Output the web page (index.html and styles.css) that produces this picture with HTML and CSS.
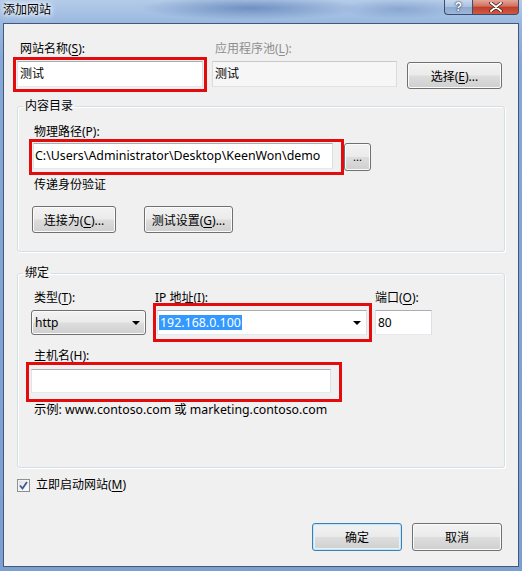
FILE: index.html
```html
<!DOCTYPE html>
<html lang="zh-CN">
<head>
    <meta charset="UTF-8">
    <title>添加网站</title>
    <link rel="stylesheet" href="styles.css">
</head>
<body>
    <div class="window">
        <!-- 标题栏 -->
        <div class="titlebar">
            <span class="title">添加网站</span>
            <div class="caption-btns">
                <span class="cap-btn cap-help">?</span>
                <span class="cap-btn cap-close">
                    <svg width="14" height="10" viewBox="0 0 14 10"><path d="M2 1 L12 9 M12 1 L2 9" stroke="#3b1410" stroke-width="3.4" stroke-linecap="round"/><path d="M2 1 L12 9 M12 1 L2 9" stroke="#fff" stroke-width="2" stroke-linecap="round"/></svg>
                </span>
            </div>
        </div>

        <div class="client">
            <!-- 网站名称 / 应用程序池 -->
            <div class="top-row">
                <div class="col col-name">
                    <div class="lbl">网站名称(<u>S</u>):</div>
                    <div class="field">
                        <div class="textbox">测试</div>
                        <span class="mark mark-name"></span>
                    </div>
                </div>
                <div class="col col-pool">
                    <div class="lbl lbl-disabled">应用程序池(<u>L</u>):</div>
                    <div class="textbox textbox-ro">测试</div>
                </div>
                <button class="btn btn-choose">选择(<u>E</u>)...</button>
            </div>

            <!-- 内容目录 -->
            <fieldset class="group group-content">
                <legend>内容目录</legend>
                <div class="lbl lbl-path">物理路径(P):</div>
                <div class="path-row">
                    <div class="field">
                        <div class="textbox textbox-path">C:\Users\Administrator\Desktop\KeenWon\demo</div>
                        <span class="mark mark-path"></span>
                    </div>
                    <button class="btn btn-browse">...</button>
                </div>
                <div class="lbl lbl-path lbl-auth">传递身份验证</div>
                <div class="auth-row">
                    <button class="btn btn-connect">连接为(<u>C</u>)...</button>
                    <button class="btn btn-test">测试设置(<u>G</u>)...</button>
                </div>
            </fieldset>

            <!-- 绑定 -->
            <fieldset class="group group-binding">
                <legend>绑定</legend>
                <div class="bind-row">
                    <div class="col col-type">
                        <div class="lbl">类型(<u>T</u>):</div>
                        <div class="combo combo-btn">
                            <span>http</span>
                            <span class="arrow"></span>
                        </div>
                    </div>
                    <div class="col col-ip">
                        <div class="lbl lbl-ip">IP 地址(<u>I</u>):</div>
                        <div class="field">
                            <div class="combo combo-edit">
                                <span class="selected">192.168.0.100</span>
                                <span class="arrow"></span>
                            </div>
                            <span class="mark mark-ip"></span>
                        </div>
                    </div>
                    <div class="col col-port">
                        <div class="lbl lbl-port">端口(<u>O</u>):</div>
                        <div class="textbox textbox-port">80</div>
                    </div>
                </div>
                <div class="lbl lbl-host">主机名(H):</div>
                <div class="field field-host">
                    <div class="textbox textbox-host"></div>
                    <span class="mark mark-host"></span>
                </div>
                <div class="lbl lbl-example">示例: www.contoso.com 或 marketing.contoso.com</div>
            </fieldset>

            <!-- 立即启动 -->
            <div class="check-row">
                <span class="checkbox">
                    <svg width="9" height="9" viewBox="0 0 9 9"><path d="M1 4.5 L3.5 7.5 L8 1" fill="none" stroke="#3c5a96" stroke-width="1.8"/></svg>
                </span>
                <span class="check-label">立即启动网站(<u>M</u>)</span>
            </div>

            <div class="footer">
                <button class="btn btn-dialog btn-default">确定</button>
                <button class="btn btn-dialog">取消</button>
            </div>
        </div>
    </div>
</body>
</html>
```

FILE: styles.css
```css
html, body {
    margin: 0; padding: 0;
    background: #fff;
}
body {
    font-family: "Noto Sans", "Noto Sans CJK SC", sans-serif;
    font-size: 12px;
    color: #000;
}
u { text-decoration: underline; text-underline-offset: 2px; }

.window {
    width: 522px; height: 571px;
    box-sizing: border-box;
    display: flex; flex-direction: column;
    background:
        radial-gradient(ellipse 110px 12px at 250px 8px, rgba(40,80,150,0.45), rgba(40,80,150,0) 100%),
        radial-gradient(ellipse 60px 10px at 400px 9px, rgba(40,80,150,0.25), rgba(40,80,150,0) 100%),
        linear-gradient(to bottom, #b4cbe8 0px, #9bb9e0 22px, #86a8d6 60px, #7b9fd0 100%);
}

/* ----------- 标题栏 ----------- */
.titlebar {
    height: 23px;
    display: flex; justify-content: space-between; align-items: flex-start;
}
.title {
    padding: 2px 0 0 3px;
    line-height: 16px;
    color: #000;
    text-shadow: 0 0 4px #fff, 0 0 6px #fff, 0 0 8px #e8f1fb;
}
.caption-btns {
    display: flex;
    margin-right: 3px;
}
.cap-btn {
    height: 15px;
    box-sizing: border-box;
    border: 1px solid #3a4f6e;
    border-top: none;
    display: flex; align-items: center; justify-content: center;
}
.cap-help {
    width: 28px;
    border-right: none;
    border-radius: 0 0 0 4px;
    background: linear-gradient(to bottom, #c9d9ee 0%, #a9c0df 50%, #8faacf 51%, #9cb7da 100%);
    color: #fff;
    font-family: "Liberation Sans", sans-serif;
    font-weight: bold; font-size: 12px;
    text-shadow: 0 0 2px #1d2d48, 0 0 1px #1d2d48;
}
.cap-close {
    width: 47px;
    border-radius: 0 0 4px 0;
    background: linear-gradient(to bottom, #e3a698 0%, #d0705f 45%, #bf3d2a 50%, #d25a42 100%);
}

/* ----------- 客户区 ----------- */
.client {
    flex: 1;
    margin: 0 3px 4px 3px;
    border: 1px solid #44597a;
    background: #f0f0f0;
    padding: 17px 13px 0 13px;
}

.lbl {
    height: 16px; line-height: 16px;
    padding-left: 3px;
    white-space: nowrap;
}
.lbl-disabled { color: #8e8e8e; }

.field { position: relative; }
.mark {
    position: absolute;
    border: 3px solid #e30b0b;
    pointer-events: none;
}
.mark-name { left: -4px; top: -4px; width: 188px; height: 29px; }
.mark-path { left: -4px; top: -4px; width: 309px; height: 30px; }
.mark-ip   { left: -4px; top: -7px; width: 213px; height: 33px; }
.mark-host { left: -5px; top: -7px; width: 310px; height: 34px; }

.textbox {
    height: 26px;
    box-sizing: border-box;
    border: 1px solid;
    border-color: #abadb3 #dbdfe6 #e3e9ef #e2e3ea;
    background: #fff;
    padding-left: 2px;
    line-height: 24px;
    white-space: nowrap; overflow: hidden;
}
.textbox-ro {
    background: #f6f6f6;
    border-color: #c9c9c9 #dcdcdc #e3e3e3 #dcdcdc;
}

.btn {
    box-sizing: border-box;
    font: inherit; color: #000;
    border: 1px solid #707070;
    border-radius: 3px;
    background: linear-gradient(to bottom, #f2f2f2 0%, #ebebeb 48%, #dddddd 52%, #cfcfcf 100%);
    box-shadow: inset 0 0 0 1px #fbfbfb;
    padding: 0;
    cursor: default;
}

/* 第一行 */
.top-row {
    display: flex; align-items: flex-start;
}
.col { display: flex; flex-direction: column; }
.col-name { width: 186px; }
.col-name .field, .col-pool .textbox { margin-top: 4px; }
.col-pool { width: 185px; margin-left: 9px; }
.btn-choose {
    width: 95px; height: 27px;
    margin: 21px 0 0 10px;
}

/* 分组框 */
.group {
    margin: 9px 0 0 0;
    border: 1px solid #d5dfe5;
    border-radius: 3px;
    box-shadow: inset 1px 1px 0 #fff, 1px 1px 0 #fff;
    min-width: 0;
}
.group legend {
    padding: 0 2px;
    line-height: 16px;
}
.group-content {
    padding: 10px 15px 18px 15px;
}
.group-content legend { margin-left: -10px; }
.lbl-path { padding-left: 1px; }
.path-row {
    display: flex; align-items: flex-start;
    margin-top: 3px;
}
.textbox-path { width: 300px; padding-left: 1px; font-size: 12.4px; }
.btn-browse {
    width: 27px; height: 28px;
    margin-left: 11px;
    font-size: 11px; line-height: 20px;
}
.lbl-auth { margin-top: 6px; }
.auth-row {
    display: flex;
    margin: 13px 0 0 -1px;
}
.btn-connect { width: 84px; height: 27px; }
.btn-test { width: 89px; height: 27px; margin-left: 28px; }

.group-binding {
    margin-top: 13px;
    padding: 9px 13px 49px 13px;
}
.group-binding legend { margin-left: -8px; }
.bind-row { display: flex; }
.col-type { width: 115px; }
.col-ip { width: 210px; margin-left: 11px; }
.col-port { width: 57px; margin-left: 8px; }
.col-type .combo, .col-ip .field, .col-port .textbox { margin-top: 4px; }
.lbl-ip { padding-left: 0; margin-left: -2px; }
.lbl-port { padding-left: 0; }

.combo {
    height: 25px;
    box-sizing: border-box;
    display: flex; align-items: center; justify-content: space-between;
    padding: 0 4px 0 3px;
}
.combo-btn {
    border: 1px solid #707070;
    border-radius: 3px;
    background: linear-gradient(to bottom, #f2f2f2 0%, #ebebeb 48%, #dddddd 52%, #cfcfcf 100%);
    box-shadow: inset 0 0 0 1px #fbfbfb;
}
.combo-edit {
    border: 1px solid;
    border-color: #abadb3 #dbdfe6 #e3e9ef #e2e3ea;
    background: #fff;
    padding-left: 1px;
}
.arrow {
    width: 0; height: 0;
    border-left: 4px solid transparent;
    border-right: 4px solid transparent;
    border-top: 4px solid #000;
    margin-right: 1px;
}
.selected {
    background: #3399ff;
    color: #fff;
    line-height: 15px;
    padding: 0 1px;
    font-size: 12.4px;
}
.textbox-port { height: 25px; line-height: 23px; }

.lbl-host { margin-top: 13px; }
.field-host { margin-top: 5px; }
.textbox-host { width: 300px; height: 24px; }
.lbl-example { margin-top: 9px; font-size: 12.3px; }

/* 复选框 */
.check-row {
    display: flex; align-items: center;
    margin-top: 9px;
    height: 16px;
}
.checkbox {
    width: 13px; height: 13px;
    box-sizing: border-box;
    border: 1px solid #8e8f8f;
    background: linear-gradient(135deg, #dcdcdc 0%, #f4f4f4 60%, #fff 100%);
    box-shadow: inset 0 0 0 1px #f4f4f4;
    display: flex; align-items: center; justify-content: center;
}
.check-label { margin-left: 6px; line-height: 16px; }

.footer {
    display: flex; justify-content: flex-end;
    margin-top: 30px;
    padding-right: 3px;
}
.btn-dialog { width: 90px; height: 28px; margin-left: 10px; }
.btn-default {
    border-color: #3c7fb1;
    box-shadow: inset 0 0 0 1px #c4e5f6, inset 0 0 0 2px #e4f3fb;
}
```
